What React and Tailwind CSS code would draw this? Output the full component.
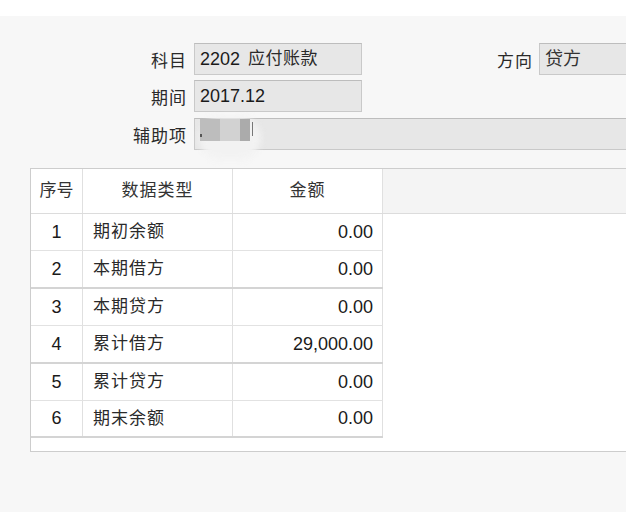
import React from "react";

const rows = [
  { no: "1", type: "期初余额", amount: "0.00", h: "h-[37px]", thick: false },
  { no: "2", type: "本期借方", amount: "0.00", h: "h-[38px]", thick: true },
  { no: "3", type: "本期贷方", amount: "0.00", h: "h-[37px]", thick: false },
  { no: "4", type: "累计借方", amount: "29,000.00", h: "h-[38px]", thick: true },
  { no: "5", type: "累计贷方", amount: "0.00", h: "h-[37px]", thick: false },
  { no: "6", type: "期末余额", amount: "0.00", h: "h-[37px]", thick: true },
];

const font = "font-['Liberation_Sans','Noto_Sans_CJK_SC',sans-serif]";

const Field = ({ label, children, className = "" }) => (
  <div className={`flex items-center h-8 ${className}`}>
    <div className="w-[187px] shrink-0 text-right text-[17px] text-[#2a2a2a] tracking-[1px] pt-[6px]">
      {label}
    </div>
    {children}
  </div>
);

const Box = ({ className = "", children }) => (
  <div
    className={`ml-[7px] h-8 shrink-0 border border-[#c9c9c9] border-t-[#bdbdbd] bg-[#e7e7e7] pl-[5px] flex items-center text-[18px] text-[#1a1a1a] whitespace-nowrap ${className}`}
  >
    {children}
  </div>
);

export default function App() {
  return (
    <div className={`w-[626px] h-[512px] overflow-hidden bg-[#f7f7f7] ${font}`}>
      <div className="h-4 bg-white" />

      <div className="pt-[27px]">
        <Field label="科目">
          <Box className="w-[168px]">
            <span>2202</span>
            <span className="ml-[8px] text-[17px] tracking-[0.5px] text-[#2a2a2a]">应付账款</span>
          </Box>
          <div className="ml-[135px] w-[35px] shrink-0 text-[17px] text-[#2a2a2a] tracking-[1px] pt-[6px] whitespace-nowrap">
            方向
          </div>
          <Box className="w-[120px] text-[17px] text-[#333]">贷方</Box>
        </Field>

        <Field label="期间" className="mt-[5px]">
          <Box className="w-[168px]">2017.12</Box>
        </Field>

        <Field label="辅助项" className="mt-[6px]">
          <div className="relative ml-[7px] h-8 w-[440px] shrink-0 border border-[#c9c9c9] border-t-[#bdbdbd] bg-[#e7e7e7]">
            {/* redacted value */}
            <div className="absolute left-[4px] top-[-2px] h-[42px] w-[62px] rounded-full bg-[#f2f2f2] blur-[3px]" />
            <div className="absolute left-[5px] top-0 h-[22px] w-[20px] bg-[#bdbdbd]" />
            <div className="absolute left-[25px] top-0 h-[22px] w-[20px] bg-[#d2d2d2]" />
            <div className="absolute left-[45px] top-0 h-[22px] w-[10px] bg-[#ababab]" />
            <div className="absolute left-[5px] top-[15px] h-[3px] w-[2px] bg-[#555]" />
            <div className="absolute left-[57px] top-[3px] h-[14px] w-[1px] bg-[#777]" />
          </div>
        </Field>
      </div>

      <div className="mt-[18px] ml-[30px] w-[620px] h-[284px] border border-[#cdcdcd] bg-white flex flex-col">
        <div className="flex h-[45px] border-b border-[#dcdcdc]">
          <div className="w-[52px] flex items-center justify-center border-r border-[#e0e0e0] text-[17px] text-[#333]">
            序号
          </div>
          <div className="w-[150px] flex items-center justify-center border-r border-[#e0e0e0] text-[17px] text-[#333] tracking-[1px]">
            数据类型
          </div>
          <div className="w-[150px] flex items-center justify-center border-r border-[#e0e0e0] text-[17px] text-[#333] tracking-[1px]">
            金额
          </div>
          <div className="flex-1 bg-[#f4f4f4]" />
        </div>

        {rows.map((r) => (
          <div key={r.no} className={`flex ${r.h}`}>
            <div
              className={`w-[352px] flex ${
                r.thick ? "border-b-2 border-[#d4d4d4]" : "border-b border-[#e2e2e2]"
              }`}
            >
              <div className="w-[52px] flex items-center justify-center border-r border-[#e0e0e0] text-[18px] text-[#1a1a1a]">
                {r.no}
              </div>
              <div className="w-[150px] flex items-center pl-[10px] border-r border-[#e0e0e0] text-[17px] text-[#2a2a2a] tracking-[1px]">
                {r.type}
              </div>
              <div className="w-[150px] flex items-center justify-end pr-[9px] border-r border-[#e0e0e0] text-[18px] text-[#1a1a1a]">
                {r.amount}
              </div>
            </div>
            <div className="flex-1" />
          </div>
        ))}
      </div>
    </div>
  );
}
